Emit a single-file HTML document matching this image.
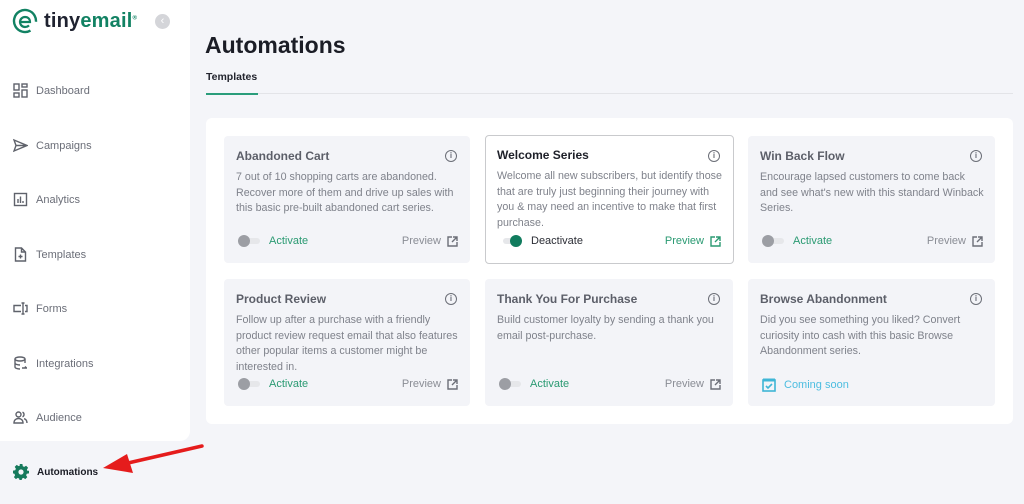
<!DOCTYPE html>
<html><head><meta charset="utf-8"><style>
*{box-sizing:border-box;margin:0;padding:0}
body{width:1024px;height:504px;overflow:hidden;background:#f4f5f9;font-family:"Liberation Sans",sans-serif;position:relative}
.side{position:absolute;left:0;top:0;width:190px;height:441px;background:#fff;border-bottom-right-radius:10px}
.logo{position:absolute;left:12px;top:8px;display:flex;align-items:center}
.logo .t{font-size:20px;font-weight:bold;color:#1f2230;letter-spacing:0.2px;margin-left:6px}
.logo .t b{color:#128263}
.back{position:absolute;left:155px;top:14px;width:15px;height:15px;border-radius:50%;background:#d4d5d9;color:#fff;font-size:11px;text-align:center;line-height:15px}
.nav{position:absolute;left:13px;display:flex;align-items:center;font-size:11px;color:#6b6e78}
.nav svg{margin-right:8px}
h1{position:absolute;left:205px;top:32px;font-size:23px;color:#1b1d26;font-weight:bold}
.tab{position:absolute;left:206px;top:71px;font-size:10.5px;font-weight:bold;color:#22242e}
.tabl{position:absolute;left:206px;top:93px;width:807px;height:1px;background:#e3e4e8}
.tabu{position:absolute;left:206px;top:93px;width:52px;height:2px;background:#2a9d7b}
.main{position:absolute;left:206px;top:118px;width:807px;height:306px;background:#fff;border-radius:6px}
.card{position:absolute;width:246px;height:127px;background:#f3f4f8;border-radius:4px;padding:13px 12px}
.card.w{background:#fff;border:1px solid #c9cacd;padding:12px 11px}
.card h3{font-size:12px;font-weight:bold;color:#5c5f69;margin-bottom:7px}
.card.w h3{color:#1e2029}
.card p{font-size:10.7px;line-height:15.5px;color:#7f828b;white-space:nowrap}
.info{position:absolute;right:13px;top:14px;width:12px;height:12px;border:1.3px solid #6c6f78;border-radius:50%;font-size:8px;font-weight:bold;text-align:center;line-height:10px;color:#6c6f78}
.bot{position:absolute;left:14px;right:12px;top:99px;display:flex;align-items:center;font-size:11px}
.tg{width:22px;height:10px;position:relative;margin-right:9px}
.tg:before{content:"";position:absolute;left:3px;top:2px;width:19px;height:6px;border-radius:3px;background:#e6e7ea}
.tg:after{content:"";position:absolute;left:0;top:-1px;width:12px;height:12px;border-radius:50%;background:#9c9ea4}
.tg.on:after{left:10px;background:#117c5e}
.act{color:#2a9a72}
.pv{margin-left:auto;color:#8a8d95;display:flex;align-items:center}
.pv svg{margin-left:6px}
</style></head><body>
<div class="side">
 <div class="logo"><svg width="26" height="26" viewBox="0 0 26 26"><circle cx="13" cy="13" r="11" fill="none" stroke="#128263" stroke-width="2.4" stroke-dasharray="58 12" transform="rotate(60 13 13)"/><path d="M8 14h10c0-3-2-5-5-5s-5 2.5-5 5 2 5 5 5c1.5 0 3-.6 4-1.6" fill="none" stroke="#128263" stroke-width="2.2"/></svg><span class="t">tiny<b>email</b><sup style="font-size:6px;color:#128263">®</sup></span></div>
 <div class="back">‹</div>
 <div class="nav" style="top:83px"><svg width="15" height="15" viewBox="0 0 15 15" fill="none" stroke="#5f626b" stroke-width="1.4"><rect x="1" y="1" width="5" height="6"/><rect x="9" y="1" width="5" height="3"/><rect x="1" y="10" width="5" height="4"/><rect x="9" y="7" width="5" height="7"/></svg>Dashboard</div>
 <div class="nav" style="top:138px"><svg width="15" height="15" viewBox="0 0 15 15" fill="none" stroke="#5f626b" stroke-width="1.4"><path d="M1 2l13 5.5L1 13l2-5.5zM3 7.5h11"/></svg>Campaigns</div>
 <div class="nav" style="top:192px"><svg width="15" height="15" viewBox="0 0 15 15" fill="none" stroke="#5f626b" stroke-width="1.4"><rect x="1.5" y="1.5" width="12" height="12"/><path d="M5 11V7M7.5 11V4.5M10 11V9"/></svg>Analytics</div>
 <div class="nav" style="top:247px"><svg width="15" height="15" viewBox="0 0 15 15" fill="none" stroke="#5f626b" stroke-width="1.4"><path d="M2.5 1h6l4 4v9h-10zM8.5 1v4h4M7.5 7.5v4M5.5 9.5h4"/></svg>Templates</div>
 <div class="nav" style="top:301px"><svg width="15" height="15" viewBox="0 0 15 15" fill="none" stroke="#5f626b" stroke-width="1.4"><path d="M8 4.5H1v6h7M10 2v11M8.5 2h3M8.5 13h3M12 4.5h2v6h-2"/></svg>Forms</div>
 <div class="nav" style="top:356px"><svg width="15" height="15" viewBox="0 0 15 15" fill="none" stroke="#5f626b" stroke-width="1.4"><ellipse cx="7" cy="3" rx="5" ry="2"/><path d="M2 3v8c0 1 2 2 5 2M12 3v4M2 7c0 1 2 2 5 2M9 12h5M12 10.5l1.5 1.5"/></svg>Integrations</div>
 <div class="nav" style="top:410px"><svg width="15" height="15" viewBox="0 0 15 15" fill="none" stroke="#5f626b" stroke-width="1.4"><circle cx="5.5" cy="4.5" r="2.5"/><path d="M1 13c0-3 2-4.5 4.5-4.5S10 10 10 13zM9.5 2.2a2.5 2.5 0 010 4.6M11 8.7c2 .5 3 2 3 4.3"/></svg>Audience</div>
</div>
<div class="nav" style="top:464px;color:#1b1d26;font-weight:bold;font-size:10px"><svg width="16" height="16" viewBox="0 0 16 16"><path fill="#167a5c" d="M6.6 0h2.8l.4 2.2 1.4.7 1.9-1.2 2 2-1.2 1.9.7 1.4L16 6.6v2.8l-2.2.4-.7 1.4 1.2 1.9-2 2-1.9-1.2-1.4.7-.4 2.2H6.6l-.4-2.2-1.4-.7-1.9 1.2-2-2 1.2-1.9-.7-1.4L0 9.4V6.6l2.2-.4.7-1.4-1.2-1.9 2-2 1.9 1.2 1.4-.7z"/><circle cx="8" cy="8" r="2.6" fill="#f4f5f9"/></svg>Automations</div>
<svg style="position:absolute;left:100px;top:440px" width="110" height="40"><path d="M102 6L28 23" stroke="#e51c1c" stroke-width="3.5" stroke-linecap="round"/><path d="M3 28L27 14 33 33z" fill="#e51c1c"/></svg>
<h1>Automations</h1>
<div class="tab">Templates</div><div class="tabl"></div><div class="tabu"></div>
<div class="main"></div>
<div class="card" style="left:224px;top:136px"><h3>Abandoned Cart</h3><div class="info">i</div><p>7 out of 10 shopping carts are abandoned.<br>Recover more of them and drive up sales with<br>this basic pre-built abandoned cart series.</p><div class="bot"><div class="tg"></div><span class="act">Activate</span><span class="pv">Preview<svg width="11" height="11" viewBox="0 0 11 11" fill="none" stroke="#6c6f78" stroke-width="1.4"><path d="M5 1H1v9h9V6M6 1h4v4M10 1L5 6"/></svg></span></div></div>
<div class="card w" style="left:485px;top:135px;height:129px;width:249px"><h3>Welcome Series</h3><div class="info">i</div><p>Welcome all new subscribers, but identify those<br>that are truly just beginning their journey with<br>you &amp; may need an incentive to make that first<br>purchase.</p><div class="bot"><div class="tg on"></div><span style="color:#2b2d35">Deactivate</span><span class="pv" style="color:#2a9a72">Preview<svg width="11" height="11" viewBox="0 0 11 11" fill="none" stroke="#2a9a72" stroke-width="1.4"><path d="M5 1H1v9h9V6M6 1h4v4M10 1L5 6"/></svg></span></div></div>
<div class="card" style="left:748px;top:136px;width:247px"><h3>Win Back Flow</h3><div class="info">i</div><p>Encourage lapsed customers to come back<br>and see what's new with this standard Winback<br>Series.</p><div class="bot"><div class="tg"></div><span class="act">Activate</span><span class="pv">Preview<svg width="11" height="11" viewBox="0 0 11 11" fill="none" stroke="#6c6f78" stroke-width="1.4"><path d="M5 1H1v9h9V6M6 1h4v4M10 1L5 6"/></svg></span></div></div>
<div class="card" style="left:224px;top:279px"><h3>Product Review</h3><div class="info">i</div><p>Follow up after a purchase with a friendly<br>product review request email that also features<br>other popular items a customer might be<br>interested in.</p><div class="bot"><div class="tg"></div><span class="act">Activate</span><span class="pv">Preview<svg width="11" height="11" viewBox="0 0 11 11" fill="none" stroke="#6c6f78" stroke-width="1.4"><path d="M5 1H1v9h9V6M6 1h4v4M10 1L5 6"/></svg></span></div></div>
<div class="card" style="left:485px;top:279px;width:248px"><h3>Thank You For Purchase</h3><div class="info">i</div><p>Build customer loyalty by sending a thank you<br>email post-purchase.</p><div class="bot"><div class="tg"></div><span class="act">Activate</span><span class="pv">Preview<svg width="11" height="11" viewBox="0 0 11 11" fill="none" stroke="#6c6f78" stroke-width="1.4"><path d="M5 1H1v9h9V6M6 1h4v4M10 1L5 6"/></svg></span></div></div>
<div class="card" style="left:748px;top:279px;width:247px"><h3>Browse Abandonment</h3><div class="info">i</div><p>Did you see something you liked? Convert<br>curiosity into cash with this basic Browse<br>Abandonment series.</p><div class="bot"><svg width="14" height="14" viewBox="0 0 14 14" fill="none" stroke="#3fb6d6" stroke-width="1.6" style="margin-right:8px"><rect x="1" y="2" width="12" height="11"/><path d="M1 2h12" stroke-width="3"/><path d="M4 8l2 2 4-4"/></svg><span style="color:#4cbde0">Coming soon</span></div></div>
</body></html>
